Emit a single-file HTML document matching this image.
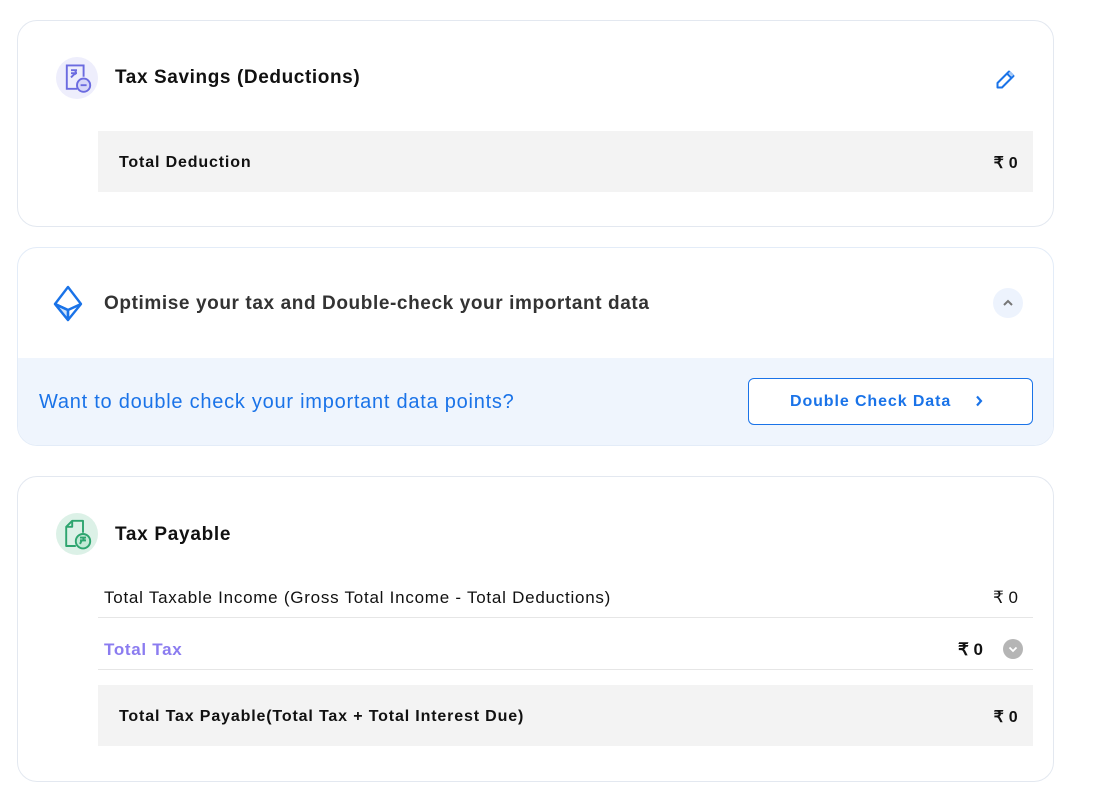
<!DOCTYPE html>
<html><head><meta charset="utf-8"><style>
*{box-sizing:border-box;margin:0;padding:0}
body{width:1096px;height:806px;background:#fff;font-family:"Liberation Sans",sans-serif;color:#111;position:relative;overflow:hidden}
.card{position:absolute;left:17px;width:1037px;border:1px solid #e3e8f0;border-radius:20px;background:#fff;overflow:hidden}
.ic{position:absolute;width:42px;height:42px;border-radius:50%;display:flex;align-items:center;justify-content:center}
.t{position:absolute;font-size:19px;font-weight:bold;letter-spacing:0.6px}
.row{position:absolute;left:80px;width:935px;background:#f3f3f3;height:61px;display:flex;align-items:center;justify-content:space-between;padding:2px 15px 0 21px;font-size:16px;font-weight:bold;letter-spacing:0.85px}
.row span:last-child{letter-spacing:0.3px}
.line{position:absolute;left:80px;width:935px;height:1px;background:#e6e6e6}
</style></head><body>
<div class="card" style="top:20px;height:207px">
 <div class="ic" style="left:38px;top:36px;background:#eeeefc">
  <svg width="36" height="36" viewBox="0 0 30 30" fill="none" stroke="#6b6be0" stroke-width="1.6"><path d="M15 24H6.5V4.5h14V14"/><path d="M10 8.5h5M10 11h5M12.5 8.5c2 0 2 3.5 0 3.5L10 14.5"/><circle cx="20.5" cy="21" r="5.5" fill="#d8d8f8"/><path d="M18 21h5"/></svg>
 </div>
 <div class="t" style="left:97px;top:46px">Tax Savings (Deductions)</div>
 <svg style="position:absolute;left:976px;top:46px" width="24" height="24" viewBox="0 0 24 24" fill="none" stroke="#1a73e8" stroke-width="2" stroke-linejoin="round"><path d="M3.5 20.5v-4.5L15 4.5l4.5 4.5L8 20.5z"/><path d="M13 6.5l4.5 4.5"/><path d="M15.5 5l3.5 3.5" stroke="#9cc3f5" stroke-width="2.5"/></svg>
 <div class="row" style="top:110px"><span>Total Deduction</span><span>₹ 0</span></div>
</div>
<div class="card" style="top:247px;height:199px;border-color:#e3ecf8">
 <svg style="position:absolute;left:33px;top:37px" width="34" height="38" viewBox="0 0 34 38" fill="none" stroke="#1a73e8" stroke-width="2.4" stroke-linejoin="round"><path d="M17 2L4 19l13 16 13-16z" fill="#fff"/><path d="M17 25L4 19l13 16z" fill="#cfe3fb"/><path d="M4 19l13 6 13-6M17 25v10"/></svg>
 <div class="t" style="left:86px;top:45px;color:#333">Optimise your tax and Double-check your important data</div>
 <div style="position:absolute;left:975px;top:40px;width:30px;height:30px;border-radius:50%;background:#edf3fd;display:flex;align-items:center;justify-content:center"><svg width="12" height="8" viewBox="0 0 12 8"><path d="M2 6l4-4 4 4" stroke="#777" stroke-width="2" fill="none"/></svg></div>
 <div style="position:absolute;left:0;top:110px;width:100%;height:89px;background:#eff5fd">
  <div style="position:absolute;left:21px;top:33px;font-size:20px;color:#1a73e8;letter-spacing:0.75px">Want to double check your important data points?</div>
  <div style="position:absolute;left:730px;top:20px;width:285px;height:47px;border:1.5px solid #1a73e8;border-radius:6px;background:#fff;color:#1a73e8;font-size:16px;font-weight:bold;padding:14px 0 0 41px;letter-spacing:0.9px">Double Check Data<svg style="position:absolute;left:226px;top:16px" width="8" height="12" viewBox="0 0 8 12"><path d="M2 1.5l4 4.5-4 4.5" stroke="#1a73e8" stroke-width="2.2" fill="none"/></svg></div>
 </div>
</div>
<div class="card" style="top:476px;height:306px">
 <div class="ic" style="left:38px;top:36px;background:#dcf1e7">
  <svg width="36" height="36" viewBox="0 0 30 30" fill="none" stroke="#2ea56f" stroke-width="1.6" stroke-linejoin="round"><path d="M14 25H6V9l5-5h9v10"/><path d="M11 4v5H6"/><circle cx="20" cy="21" r="6" fill="#c3e9d6"/><path d="M17.5 18h5M17.5 20.3h5M19 18c2 0 2 2.3 0 2.3l-1.5 3"/></svg>
 </div>
 <div class="t" style="left:97px;top:47px;letter-spacing:0.7px">Tax Payable</div>
 <div style="position:absolute;left:86px;top:111px;font-size:17px;letter-spacing:0.75px">Total Taxable Income (Gross Total Income - Total Deductions)</div>
 <div style="position:absolute;left:975px;top:111px;font-size:17px">₹ 0</div>
 <div class="line" style="top:140px"></div>
 <div style="position:absolute;left:86px;top:163px;font-size:17px;font-weight:bold;color:#8b7cf0;letter-spacing:0.7px">Total Tax</div>
 <div style="position:absolute;left:940px;top:163px;font-size:17px;font-weight:bold">₹ 0</div>
 <div style="position:absolute;left:985px;top:162px;width:20px;height:20px;border-radius:50%;background:#b5b5b5;display:flex;align-items:center;justify-content:center"><svg width="10" height="7" viewBox="0 0 10 7"><path d="M1.5 1.5l3.5 3.5 3.5-3.5" stroke="#fff" stroke-width="1.8" fill="none"/></svg></div>
 <div class="line" style="top:192px"></div>
 <div class="row" style="top:208px"><span>Total Tax Payable(Total Tax + Total Interest Due)</span><span>₹ 0</span></div>
</div>
</body></html>
